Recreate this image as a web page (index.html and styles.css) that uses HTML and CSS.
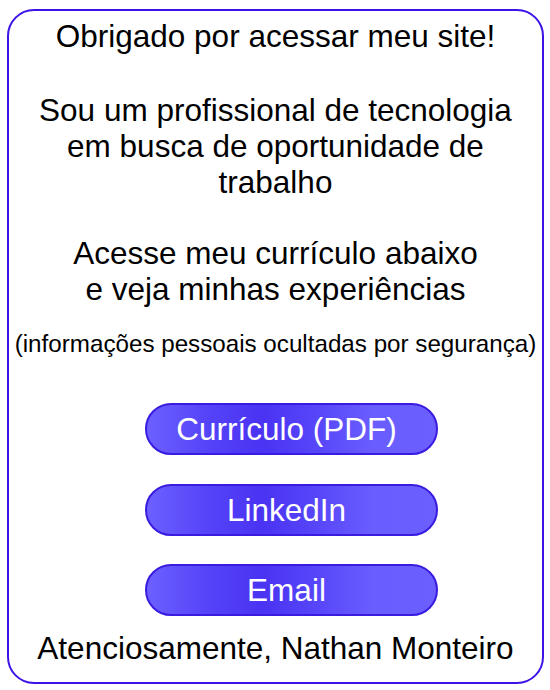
FILE: index.html
```html
<!DOCTYPE html>
<html lang="pt-BR">
<head>
<meta charset="utf-8">
<title>Nathan Monteiro</title>
<link rel="stylesheet" href="styles.css">
</head>
<body>
<main class="card">
  <p class="line thanks">Obrigado por acessar meu site!</p>
  <p class="line intro">Sou um profissional de tecnologia<br>em busca de oportunidade de<br>trabalho</p>
  <p class="line cv">Acesse meu currículo abaixo<br>e veja minhas experiências</p>
  <p class="note">(informações pessoais ocultadas por segurança)</p>
  <nav class="buttons">
    <a class="btn" href="#">Currículo (PDF)</a>
    <a class="btn" href="#">LinkedIn</a>
    <a class="btn" href="#">Email</a>
  </nav>
  <p class="line sign">Atenciosamente, Nathan Monteiro</p>
</main>
</body>
</html>
```

FILE: styles.css
```css
html, body {
  background: #ffffff;
}
body {
  margin: 9px 6px 6px 7px;
  font-family: "Liberation Sans", Arial, sans-serif;
  color: #000;
}
.card {
  box-sizing: border-box;
  width: 537px;
  border: 2px solid #3d12e6;
  border-radius: 27px;
  padding: 6.5px 0 16px;
  display: flex;
  flex-direction: column;
  align-items: center;
  text-align: center;
}
.line {
  margin: 0;
  font-size: 31.5px;
  line-height: 36px;
  white-space: nowrap;
}
.intro {
  margin-top: 38.5px;
}
.cv {
  margin-top: 35px;
}
.note {
  margin: 23px 0 0;
  font-size: 24.2px;
  line-height: 28px;
  white-space: nowrap;
}
.buttons {
  margin-top: 45px;
  width: 293px;
  padding-left: 32px;
  display: flex;
  flex-direction: column;
  gap: 28.5px;
}
.btn {
  box-sizing: border-box;
  height: 52px;
  border: 2px solid #3a1ce0;
  border-radius: 26px;
  background: linear-gradient(90deg, #6c60ff 0%, #5442f8 22%, #4a33f3 40%, #5645f9 58%, #6a5dff 78%, #6b5fff 100%);
  color: #fff;
  text-decoration: none;
  font-size: 31.5px;
  line-height: 48px;
  padding-right: 10px;
  display: block;
}
.sign {
  margin-top: 14px;
}
```
